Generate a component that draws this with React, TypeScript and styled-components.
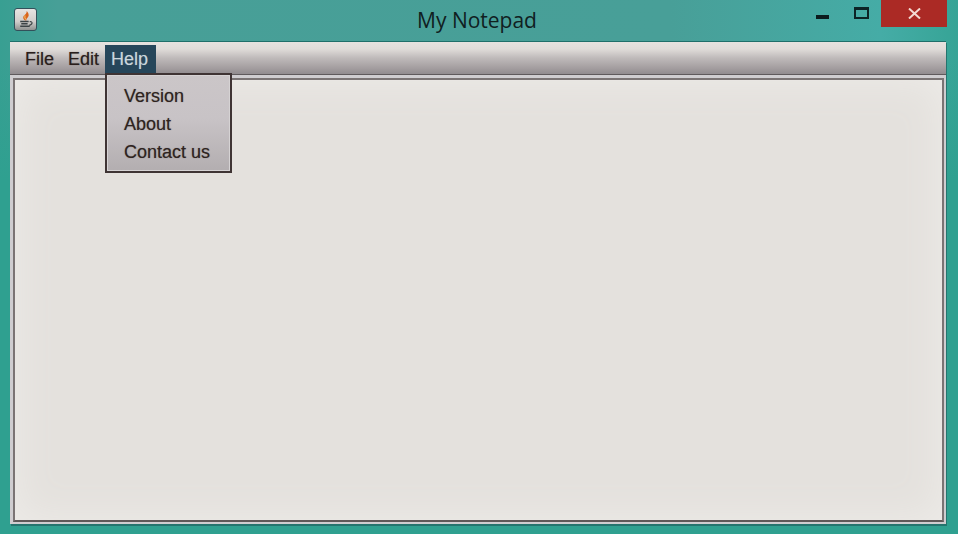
import { createGlobalStyle } from "styled-components";
import styled from "styled-components";

const GlobalStyle = createGlobalStyle`
  html, body {
    margin: 0;
    padding: 0;
    height: 100%;
    overflow: hidden;
  }
  #root {
    height: 100%;
  }
`;

const Frame = styled.div`
  width: 958px;
  height: 534px;
  box-sizing: border-box;
  display: flex;
  flex-direction: column;
  background:
    linear-gradient(180deg, rgba(47, 160, 144, 0) 0, rgba(47, 160, 144, 0) 60px, #2fa090 180px),
    linear-gradient(90deg, #389f92 0%, #479f97 6%, #489f98 70%, #45aca6 92%, #36a496 100%);
  font-family: "Liberation Sans", Arial, sans-serif;
`;

const TitleBar = styled.div`
  height: 41px;
  flex: none;
  display: grid;
  grid-template-columns: 1fr auto 1fr;
  align-items: start;
`;

const AppIcon = styled.div`
  width: 23px;
  height: 23px;
  margin: 8px 0 0 14px;
  border-radius: 3px;
  border: 1px solid #33505a;
  box-sizing: border-box;
  background: linear-gradient(180deg, #e6e4e2 0%, #d0cdcb 60%, #8f9290 100%);
  display: flex;
  align-items: center;
  justify-content: center;
`;

const Title = styled.div`
  font-family: "Open Sans", "Noto Sans", sans-serif;
  font-size: 21px;
  line-height: 28px;
  margin: 6px 4px 0 0;
  color: #10201f;
`;

const WindowButtons = styled.div`
  display: flex;
  align-items: flex-start;
  justify-content: flex-end;
  margin-right: 11px;
`;

const MinButton = styled.div`
  width: 13px;
  height: 4px;
  margin: 15px 25px 0 0;
  background: #0c1c1e;
`;

const MaxButton = styled.div`
  width: 15px;
  height: 12px;
  box-sizing: border-box;
  margin: 7px 12px 0 0;
  border: 2px solid #0c2426;
  border-top-width: 3px;
`;

const CloseButton = styled.div`
  width: 66px;
  height: 27px;
  background: #ab2a25;
  display: flex;
  align-items: center;
  justify-content: center;
`;

const ClientArea = styled.div`
  flex: 1;
  margin: 0 12px 10px 10px;
  display: flex;
  flex-direction: column;
  position: relative;
  border-top: 1px solid #1f6f6a;
  box-shadow: 1px 2px 0 #24746e;
  background: #c6c4c6;
`;

const MenuBar = styled.div`
  height: 33px;
  flex: none;
  display: flex;
  padding: 3px 0 0 8px;
  box-sizing: border-box;
  background: linear-gradient(180deg, #e6e2df 0%, #e0dcd9 22%, #bfbaba 50%, #a39d9f 82%, #918c8f 100%);
  border-bottom: 1px solid #5f5a5c;
`;

const MenuItem = styled.div<{ $active?: boolean }>`
  height: 29px;
  box-sizing: border-box;
  padding: ${(p) => (p.$active ? "0 8px 0 6px" : "0 7px")};
  margin-left: ${(p) => (p.$active ? "-1px" : "0")};
  font-size: 18px;
  line-height: 28px;
  color: ${(p) => (p.$active ? "#cbd6dc" : "#2a1e1c")};
  background: ${(p) => (p.$active ? "#26465a" : "transparent")};
  text-shadow: 0 0 1px ${(p) => (p.$active ? "rgba(203, 214, 220, 0.4)" : "rgba(42, 30, 28, 0.5)")};
`;

const EditorWrap = styled.div`
  flex: 1;
  padding: 3px 2px 2px 3px;
  background: #cfcdd0;
  display: flex;
`;

const Editor = styled.div`
  flex: 1;
  box-sizing: border-box;
  border: 2px solid #7a7474;
  border-bottom-color: #5e5858;
  background: #e4e1dd;
  box-shadow: inset 0 0 40px 0 #eeecE9;
`;

const Popup = styled.div`
  position: absolute;
  left: 95px;
  top: 31px;
  width: 127px;
  height: 100px;
  box-sizing: border-box;
  padding: 7px 0 0 17px;
  border: 2px solid #3f3434;
  background: linear-gradient(180deg, #cbc6c8 0%, #c8c3c6 45%, #b3aeb0 100%);
  box-shadow: inset 0 0 0 1px #d6d3d4;
`;

const PopupItem = styled.div`
  font-size: 18px;
  line-height: 28px;
  color: #2e2320;
  text-shadow: 0 0 1px rgba(46, 35, 32, 0.5);
`;

function JavaIcon() {
  return (
    <svg width="19" height="19" viewBox="0 0 18 18">
      <path d="M10 1 C11 4 6 5 7 8 C7.5 9.5 9 10 10 10 C9 8.5 12 7 12 5 C12 3 11 2 10 1Z" fill="#d9641c" />
      <path d="M8.5 5 C8 7 8.5 8 9.5 9" stroke="#f4c46a" strokeWidth="1" fill="none" />
      <path d="M4 11 H12 M5 13 H11 M4 15.5 H13" stroke="#3c4446" strokeWidth="1.4" />
      <path d="M13 11 C16 10.5 16 14 12.5 14.5" stroke="#3c4446" strokeWidth="1.1" fill="none" />
    </svg>
  );
}

function CloseIcon() {
  return (
    <svg width="13" height="11" viewBox="0 0 13 11">
      <path d="M1 0.5 L12 10.5 M12 0.5 L1 10.5" stroke="#f3d9d2" strokeWidth="2" />
    </svg>
  );
}

export default function App() {
  return (
    <>
      <GlobalStyle />
      <Frame>
        <TitleBar>
          <AppIcon>
            <JavaIcon />
          </AppIcon>
          <Title>My Notepad</Title>
          <WindowButtons>
            <MinButton />
            <MaxButton />
            <CloseButton>
              <CloseIcon />
            </CloseButton>
          </WindowButtons>
        </TitleBar>
        <ClientArea>
          <MenuBar>
            <MenuItem>File</MenuItem>
            <MenuItem>Edit</MenuItem>
            <MenuItem $active>Help</MenuItem>
          </MenuBar>
          <EditorWrap>
            <Editor />
          </EditorWrap>
          <Popup>
            <PopupItem>Version</PopupItem>
            <PopupItem>About</PopupItem>
            <PopupItem>Contact us</PopupItem>
          </Popup>
        </ClientArea>
      </Frame>
    </>
  );
}
